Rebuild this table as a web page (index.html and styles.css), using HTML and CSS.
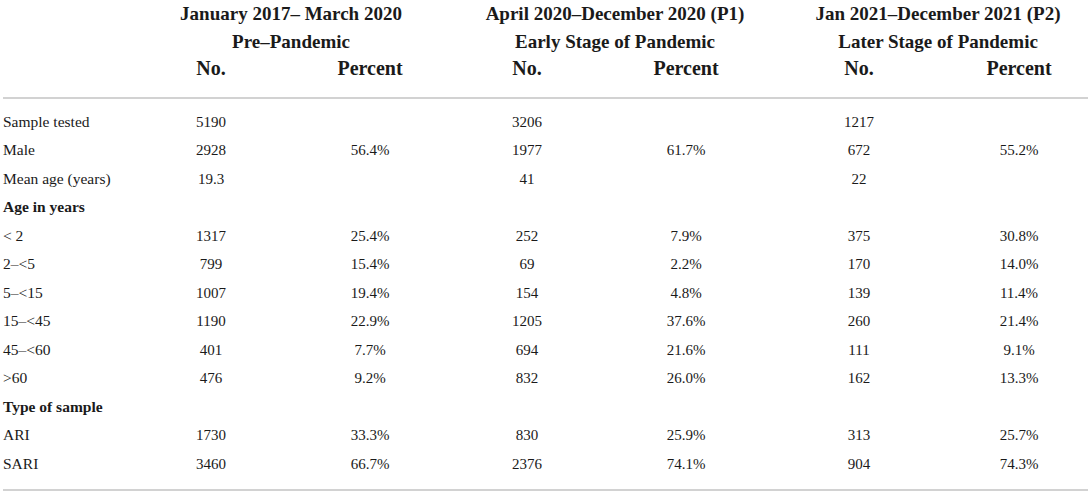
FILE: index.html
```html
<!DOCTYPE html>
<html lang="en">
<head>
    <meta charset="UTF-8">
    <meta name="viewport" content="width=device-width, initial-scale=1.0">
    <title>Sample characteristics by period</title>
    <link rel="stylesheet" href="styles.css">
</head>
<body>
    <div class="table-wrap">
        <table class="data-table">
            <colgroup>
                <col class="col-label">
                <col class="col-no1">
                <col class="col-pct1">
                <col class="col-no2">
                <col class="col-pct2">
                <col class="col-no3">
                <col class="col-pct3">
            </colgroup>
            <thead>
                <tr class="period-row">
                    <th></th>
                    <th colspan="2">January 2017– March 2020<br>Pre–Pandemic</th>
                    <th colspan="2" class="period-p1">April 2020–December 2020 (P1)<br>Early Stage of Pandemic</th>
                    <th colspan="2" class="period-p2">Jan 2021–December 2021 (P2)<br>Later Stage of Pandemic</th>
                </tr>
                <tr class="unit-row">
                    <th></th>
                    <th>No.</th>
                    <th>Percent</th>
                    <th>No.</th>
                    <th>Percent</th>
                    <th>No.</th>
                    <th>Percent</th>
                </tr>
            </thead>
            <tbody>
                <tr><td>Sample tested</td><td>5190</td><td></td><td>3206</td><td></td><td>1217</td><td></td></tr>
                <tr><td>Male</td><td>2928</td><td>56.4%</td><td>1977</td><td>61.7%</td><td>672</td><td>55.2%</td></tr>
                <tr><td>Mean age (years)</td><td>19.3</td><td></td><td>41</td><td></td><td>22</td><td></td></tr>
                <tr class="group"><td>Age in years</td><td></td><td></td><td></td><td></td><td></td><td></td></tr>
                <tr><td>&lt; 2</td><td>1317</td><td>25.4%</td><td>252</td><td>7.9%</td><td>375</td><td>30.8%</td></tr>
                <tr><td>2–&lt;5</td><td>799</td><td>15.4%</td><td>69</td><td>2.2%</td><td>170</td><td>14.0%</td></tr>
                <tr><td>5–&lt;15</td><td>1007</td><td>19.4%</td><td>154</td><td>4.8%</td><td>139</td><td>11.4%</td></tr>
                <tr><td>15–&lt;45</td><td>1190</td><td>22.9%</td><td>1205</td><td>37.6%</td><td>260</td><td>21.4%</td></tr>
                <tr><td>45–&lt;60</td><td>401</td><td>7.7%</td><td>694</td><td>21.6%</td><td>111</td><td>9.1%</td></tr>
                <tr><td>&gt;60</td><td>476</td><td>9.2%</td><td>832</td><td>26.0%</td><td>162</td><td>13.3%</td></tr>
                <tr class="group"><td>Type of sample</td><td></td><td></td><td></td><td></td><td></td><td></td></tr>
                <tr><td>ARI</td><td>1730</td><td>33.3%</td><td>830</td><td>25.9%</td><td>313</td><td>25.7%</td></tr>
                <tr><td>SARI</td><td>3460</td><td>66.7%</td><td>2376</td><td>74.1%</td><td>904</td><td>74.3%</td></tr>
            </tbody>
        </table>
    </div>
</body>
</html>
```

FILE: styles.css
```css
* {
    margin: 0;
    padding: 0;
    box-sizing: border-box;
}

body {
    font-family: "Liberation Serif", "Times New Roman", serif;
    color: #1a1a1a;
    background-color: #fff;
}

.table-wrap {
    padding: 0 3px;
}

.data-table {
    width: 1085px;
    table-layout: fixed;
    border-collapse: collapse;
}

.col-label { width: 129px; }
.col-no1 { width: 158px; }
.col-pct1 { width: 160px; }
.col-no2 { width: 154px; }
.col-pct2 { width: 164px; }
.col-no3 { width: 182px; }
.col-pct3 { width: 138px; }

.data-table th {
    font-size: 19px;
    font-weight: bold;
    line-height: 27.5px;
    text-align: center;
    white-space: nowrap;
}

.period-row .period-p1 {
    padding-left: 12px;
}

.period-row .period-p2 {
    padding-left: 20px;
}

.unit-row th {
    font-size: 20px;
    padding-bottom: 14px;
    border-bottom: 2px solid #d2d2d2;
}

.data-table td {
    font-size: 15px;
    line-height: 28.5px;
    text-align: center;
    white-space: nowrap;
}

.data-table td:first-child {
    font-size: 15.5px;
    text-align: left;
    padding-left: 0;
}

.data-table tr.group td:first-child {
    font-weight: bold;
}

.data-table tbody tr:first-child td {
    padding-top: 9px;
}

.data-table tbody tr:last-child td {
    padding-bottom: 11px;
    border-bottom: 2px solid #d2d2d2;
}
```
